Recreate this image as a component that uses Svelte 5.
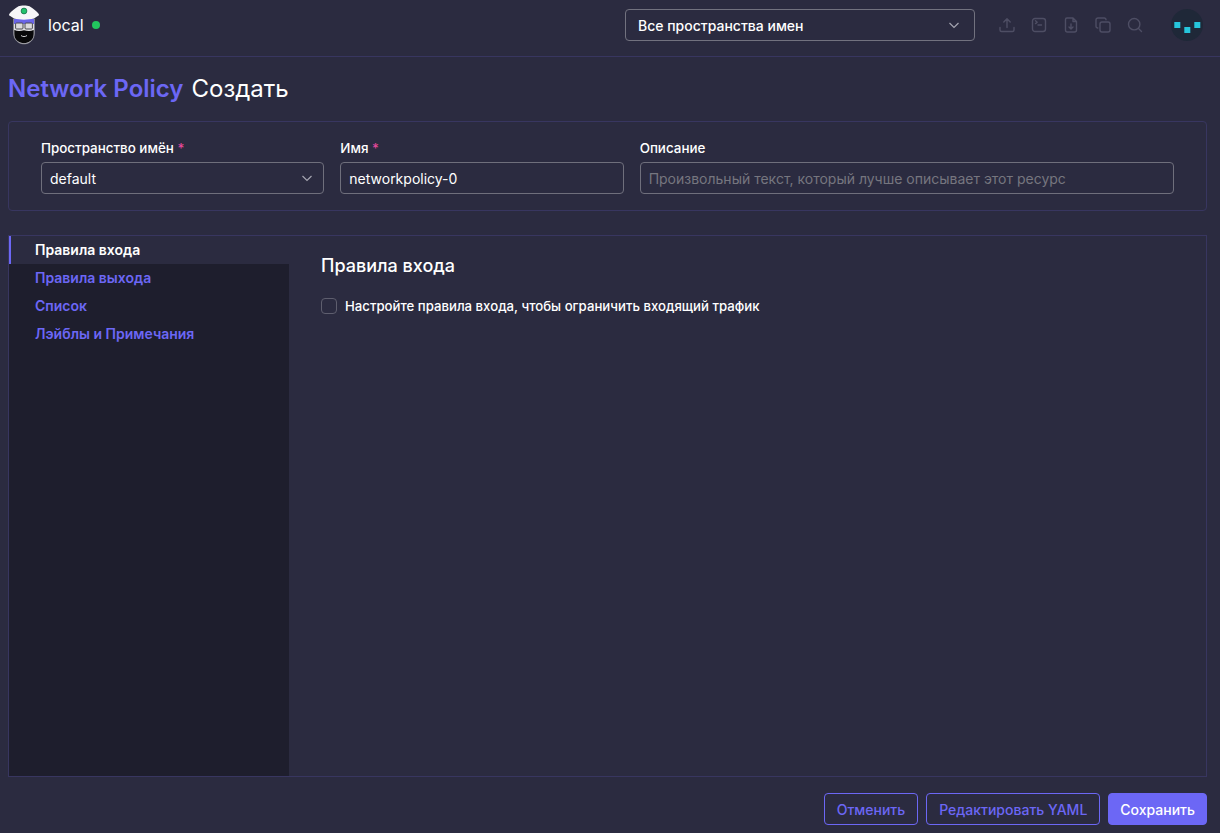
<script>
  let tabs = ["Правила входа", "Правила выхода", "Список", "Лэйблы и Примечания"];
  let active = "Правила входа";
  let name = "networkpolicy-0";
  let description = "";
  let enabled = false;
</script>

<div class="page">
  <header class="topbar">
    <div class="cluster">
      <svg class="logo" viewBox="0 0 32 40" width="32" height="40" aria-hidden="true">
        <path d="M5.6 14 H26.4 V28 C26.4 35 21.5 38.9 16 38.9 C10.5 38.9 5.6 35 5.6 28 Z" fill="#e4e4e8" stroke="#8a8a92" stroke-width="0.7" />
        <path d="M6.3 25 C10 26.6 13 26 16 25.2 C19 26 22 26.6 25.7 25 V29 C25.7 35 21 38.2 16 38.2 C11 38.2 6.3 35 6.3 29 Z" fill="#08080a" />
        <path d="M13 30.5 C14.6 31.9 17.4 31.9 19 30.5" fill="none" stroke="#e4e4e8" stroke-width="0.9" />
        <rect x="6" y="14" width="20" height="5" fill="#6a65e8" />
        <rect x="7.6" y="18" width="7.4" height="6" rx="1" fill="#dadade" stroke="#4a4a50" stroke-width="1" />
        <rect x="17" y="18" width="7.4" height="6" rx="1" fill="#dadade" stroke="#4a4a50" stroke-width="1" />
        <path d="M10.5 1.2 C13 .2 19 .2 21.5 1.2 C25 3 29 6.6 30.8 9 C31.2 10 30.8 10.6 29.8 11 L26 13.6 C20 15 12 15 6 13.6 L2.2 11 C1.2 10.6 .8 10 1.2 9 C3 6.6 7 3 10.5 1.2 Z" fill="#f6f6f8" />
        <circle cx="16" cy="6" r="2.9" fill="#22c36c" stroke="#0e5f3c" stroke-width="0.7" />
      </svg>
      <span class="cluster-name">local</span>
      <span class="status"></span>
    </div>

    <div class="tools">
      <button class="ns-select" type="button">
        <span>Все пространства имен</span>
        <svg class="chevron" viewBox="0 0 12 12" width="12" height="12"><path d="M1.5 4 L6 8.5 L10.5 4" /></svg>
      </button>

      <div class="icons">
        <svg viewBox="0 0 16 16" width="16" height="16">
          <path d="M8 10.5 V2 M4.8 5 L8 1.8 L11.2 5 M1 10.5 V13 a1.5 1.5 0 0 0 1.5 1.5 H13.5 a1.5 1.5 0 0 0 1.5 -1.5 V10.5" />
        </svg>
        <svg viewBox="0 0 16 16" width="16" height="16">
          <rect x="1.5" y="1.5" width="13" height="13" rx="2.5" />
          <path d="M4.5 3.8 L6.2 5.2 L4.5 6.6 M7 8 H10.5" />
        </svg>
        <svg viewBox="0 0 16 16" width="16" height="16">
          <path d="M4 1 H10 L13.5 4.5 V13 a2 2 0 0 1 -2 2 H4.5 a2 2 0 0 1 -2 -2 V2.5 a1.5 1.5 0 0 1 1.5 -1.5 Z M10 1 V4.5 H13.5 M8 7 V11.5 M6 10 L8 12 L10 10" />
        </svg>
        <svg viewBox="0 0 16 16" width="16" height="16">
          <rect x="5" y="5" width="10" height="10" rx="2" />
          <path d="M2.8 11 A1.8 1.8 0 0 1 1 9.2 V3 A2 2 0 0 1 3 1 H9.2 A1.8 1.8 0 0 1 11 2.8" />
        </svg>
        <svg viewBox="0 0 16 16" width="16" height="16">
          <circle cx="7.2" cy="7.2" r="5.7" />
          <path d="M11.5 11.5 L14.5 14.5" />
        </svg>
      </div>

      <div class="avatar">
        <svg viewBox="0 0 32 32" width="32" height="32">
          <rect x="3.3" y="13" width="6" height="6" fill="#26c6dc" />
          <rect x="13.3" y="18" width="6" height="6" fill="#26c6dc" />
          <rect x="23.3" y="13" width="6" height="6" fill="#26c6dc" />
        </svg>
      </div>
    </div>
  </header>

  <main class="content">
    <h1 class="title"><span class="resource">Network Policy</span> <span>Создать</span></h1>

    <section class="name-card">
      <div class="field">
        <label for="namespace">Пространство имён <em>*</em></label>
        <button id="namespace" class="select" type="button">
          <span>default</span>
          <svg class="chevron" viewBox="0 0 12 12" width="12" height="12"><path d="M1.5 4 L6 8.5 L10.5 4" /></svg>
        </button>
      </div>
      <div class="field">
        <label for="name">Имя <em>*</em></label>
        <input id="name" type="text" bind:value={name} />
      </div>
      <div class="field wide">
        <label for="description">Описание</label>
        <input
          id="description"
          type="text"
          placeholder="Произвольный текст, который лучше описывает этот ресурс"
          bind:value={description}
        />
      </div>
    </section>

    <section class="tabbed">
      <nav class="side">
        {#each tabs as tab}
          <button class="tab" class:active={tab === active} type="button" onclick={() => (active = tab)}>{tab}</button>
        {/each}
      </nav>
      <div class="panel">
        <h3>{active}</h3>
        <label class="check">
          <input type="checkbox" bind:checked={enabled} />
          <span class="box"></span>
          <span>Настройте правила входа, чтобы ограничить входящий трафик</span>
        </label>
      </div>
    </section>

    <footer class="actions">
      <button class="btn outline" type="button">Отменить</button>
      <button class="btn outline" type="button">Редактировать YAML</button>
      <button class="btn primary" type="button">Сохранить</button>
    </footer>
  </main>
</div>

<style>
  :global(body) {
    background: #2b2b40;
    color: #fff;
    font-family: Inter, "Noto Sans", sans-serif;
    font-size: 14px;
  }

  .page {
    height: 833px;
    display: flex;
    flex-direction: column;
    overflow: hidden;
  }

  button,
  input {
    font-family: inherit;
    font-size: 14px;
    color: inherit;
  }

  .topbar {
    height: 57px;
    flex: none;
    box-sizing: border-box;
    display: flex;
    align-items: center;
    justify-content: space-between;
    padding: 0 17px 6px 8px;
    border-bottom: 1px solid #383660;
  }

  .cluster {
    display: flex;
    align-items: center;
  }

  .logo {
    margin-right: 8px;
  }

  .cluster-name {
    font-size: 16px;
  }

  .status {
    width: 8px;
    height: 8px;
    margin-left: 8px;
    border-radius: 50%;
    background: #22c55e;
  }

  .tools {
    display: flex;
    align-items: center;
  }

  .ns-select {
    width: 350px;
    height: 32px;
    box-sizing: border-box;
    display: flex;
    align-items: center;
    justify-content: space-between;
    padding: 0 14px 0 12px;
    background: none;
    border: 1px solid #72727f;
    border-radius: 4px;
    font-weight: 500;
  }

  .chevron path {
    fill: none;
    stroke: #a5a5b0;
    stroke-width: 1.2;
  }

  .icons {
    display: flex;
    gap: 16px;
    margin-left: 24px;
  }

  .icons svg {
    fill: none;
    stroke: #4e4e64;
    stroke-width: 1.4;
    stroke-linecap: round;
    stroke-linejoin: round;
  }

  .avatar {
    width: 32px;
    height: 32px;
    margin-left: 28px;
    border-radius: 50%;
    background: #1f2838;
  }

  .content {
    flex: 1;
    min-height: 0;
    display: flex;
    flex-direction: column;
    padding: 0 13px 8px 8px;
  }

  .title {
    margin: 16px 0 17px;
    font-size: 24px;
    line-height: 31px;
    font-weight: 400;
    display: flex;
    gap: 8px;
  }

  .resource {
    color: #6c67f5;
    font-weight: 600;
  }

  .name-card {
    flex: none;
    box-sizing: border-box;
    height: 90px;
    display: flex;
    gap: 16px;
    padding: 18px 32px 0;
    border: 1px solid #383660;
    border-radius: 4px;
  }

  .field {
    width: 283.33px;
    display: flex;
    flex-direction: column;
  }

  .field.wide {
    width: 534.4px;
  }

  .field label {
    font-size: 13.4px;
    line-height: 17px;
    font-weight: 500;
    margin-bottom: 5px;
  }

  .field em {
    color: #e5489b;
    font-style: normal;
  }

  .select,
  .field input {
    width: 100%;
    height: 32px;
    box-sizing: border-box;
    background: none;
    border: 1px solid #6f6f7c;
    border-radius: 4px;
    padding: 0 8px;
    outline: none;
  }

  .select {
    display: flex;
    align-items: center;
    justify-content: space-between;
    padding: 0 10px 0 8px;
  }

  .field input::placeholder {
    color: #76767f;
  }

  .tabbed {
    flex: 1;
    min-height: 0;
    margin-top: 24px;
    display: flex;
    border: 1px solid #383660;
  }

  .side {
    width: 280px;
    flex: none;
    display: flex;
    flex-direction: column;
    background: #1e1e2d;
  }

  .tab {
    height: 28px;
    flex: none;
    padding: 0 0 2px 26px;
    background: none;
    border: none;
    text-align: left;
    font-weight: 600;
    color: #6c67f5;
  }

  .tab.active {
    color: #fff;
    background: #2b2b40;
    box-shadow: inset 2px 0 0 #6c67f5;
  }

  .panel {
    flex: 1;
    padding: 19px 32px;
  }

  .panel h3 {
    margin: 0 0 20px;
    font-size: 18px;
    line-height: 21px;
    font-weight: 500;
  }

  .check {
    display: flex;
    align-items: center;
    gap: 8px;
    line-height: 20px;
    font-weight: 500;
    font-size: 13.2px;
  }

  .check input {
    position: absolute;
    opacity: 0;
  }

  .box {
    width: 14px;
    height: 14px;
    border: 1px solid #5e5e6e;
    border-radius: 4px;
  }

  .actions {
    flex: none;
    display: flex;
    justify-content: flex-end;
    gap: 8px;
    margin-top: 16px;
  }

  .btn {
    height: 32px;
    padding: 0 12px;
    border-radius: 4px;
    font-weight: 500;
  }

  .outline {
    background: none;
    border: 1px solid #6c67f5;
    color: #6c67f5;
  }

  .primary {
    padding: 0 11px;
    background: #6c67f5;
    border: 1px solid #6c67f5;
    color: #fff;
  }
</style>
